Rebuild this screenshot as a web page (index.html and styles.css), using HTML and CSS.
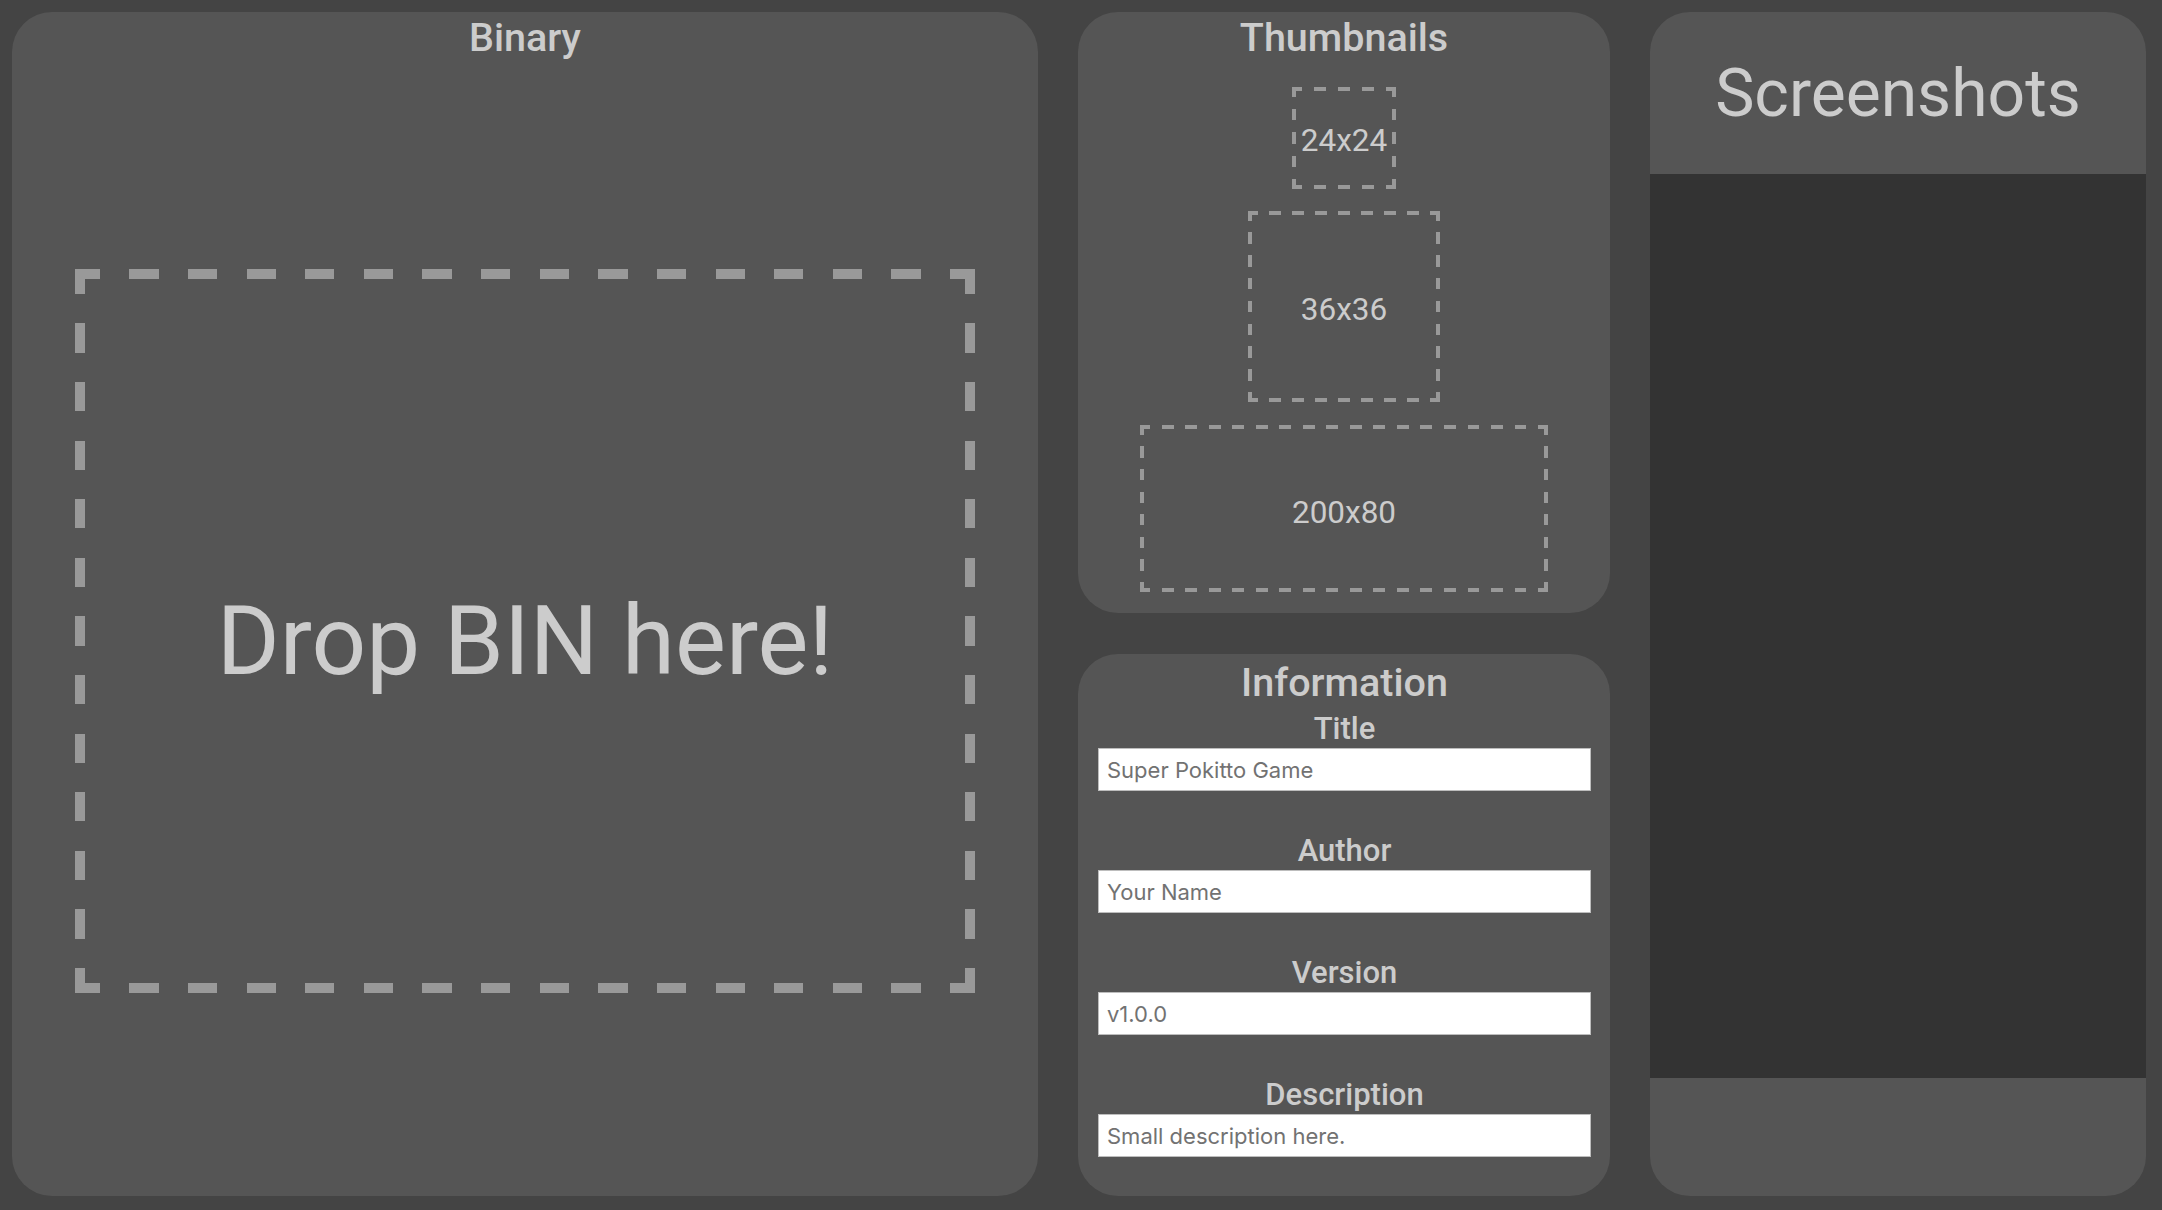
FILE: index.html
```html
<!DOCTYPE html>
<html lang="en">
<head>
<meta charset="utf-8">
<title>Pokitto Game Packager</title>
<link rel="stylesheet" href="styles.css">
</head>
<body>
<div class="app">
  <section class="panel binary">
    <h2 class="panel-title">Binary</h2>
    <div class="drop-area">
      <div class="dashed dropzone">Drop BIN here!</div>
    </div>
  </section>

  <div class="middle">
    <section class="panel thumbs">
      <h2 class="panel-title">Thumbnails</h2>
      <div class="dashed thumb thumb-24">24x24</div>
      <div class="dashed thumb thumb-36">36x36</div>
      <div class="dashed thumb thumb-200">200x80</div>
    </section>

    <section class="panel info">
      <h2 class="panel-title">Information</h2>
      <div class="field">
        <label for="f-title">Title</label>
        <input id="f-title" type="text" placeholder="Super Pokitto Game">
      </div>
      <div class="field">
        <label for="f-author">Author</label>
        <input id="f-author" type="text" placeholder="Your Name">
      </div>
      <div class="field">
        <label for="f-version">Version</label>
        <input id="f-version" type="text" placeholder="v1.0.0">
      </div>
      <div class="field">
        <label for="f-desc">Description</label>
        <input id="f-desc" type="text" placeholder="Small description here.">
      </div>
    </section>
  </div>

  <section class="panel shots">
    <header class="shots-head">Screenshots</header>
    <div class="shots-list"></div>
    <div class="shots-foot"></div>
  </section>
</div>
</body>
</html>
```

FILE: styles.css
```css
html, body {
  margin: 0;
  height: 100%;
}

body {
  background: #444444;
  color: #cccccc;
  font-family: Roboto, "Liberation Sans", sans-serif;
}

.app {
  box-sizing: border-box;
  height: 100vh;
  padding: 12px 16px 14px 12px;
  display: grid;
  grid-template-columns: 1026px 532px 1fr;
  column-gap: 40px;
}

.panel {
  background: #555555;
  border-radius: 40px;
}

.panel-title {
  margin: 0;
  padding-top: 4px;
  font-size: 39.5px;
  font-weight: 500;
  line-height: 44px;
  text-align: center;
}

/* Dashed frame: dashes of equal length to gaps, L-shaped corners */
.dashed {
  --dc: #999999;
  box-sizing: border-box;
  padding: var(--w);
  background:
    repeating-linear-gradient(90deg,
      var(--dc) calc(var(--c) - var(--gx)), var(--dc) var(--c),
      transparent var(--c), transparent calc(var(--c) + var(--gx)))
      left top / 100% var(--w) no-repeat,
    repeating-linear-gradient(90deg,
      var(--dc) calc(var(--c) - var(--gx)), var(--dc) var(--c),
      transparent var(--c), transparent calc(var(--c) + var(--gx)))
      left bottom / 100% var(--w) no-repeat,
    repeating-linear-gradient(180deg,
      var(--dc) calc(var(--c) - var(--gy)), var(--dc) var(--c),
      transparent var(--c), transparent calc(var(--c) + var(--gy)))
      left top / var(--w) 100% no-repeat,
    repeating-linear-gradient(180deg,
      var(--dc) calc(var(--c) - var(--gy)), var(--dc) var(--c),
      transparent var(--c), transparent calc(var(--c) + var(--gy)))
      right top / var(--w) 100% no-repeat;
}

/* Binary */
.binary {
  display: flex;
  flex-direction: column;
}

.drop-area {
  flex: 1;
  padding-top: 6px;
  display: flex;
  align-items: center;
  justify-content: center;
}

.dropzone {
  --w: 10px;
  --c: 25px;
  --gx: 29.31px;
  --gy: 29.304px;
  width: 900px;
  height: 724px;
  padding-top: 30px;
  display: flex;
  align-items: center;
  justify-content: center;
  font-size: 96px;
  font-weight: 400;
}

/* Middle column */
.middle {
  display: flex;
  flex-direction: column;
  gap: 41px;
  min-height: 0;
}

.thumbs {
  display: flex;
  flex-direction: column;
  align-items: center;
  padding-bottom: 21px;
}

.thumb {
  --w: 4px;
  --c: 10px;
  padding-top: 10px;
  display: flex;
  align-items: center;
  justify-content: center;
  font-size: 31.5px;
  margin-top: 22px;
}

.thumb-24 {
  --gx: 12px;
  --gy: 11.71px;
  width: 104px;
  height: 102px;
  padding-top: 8px;
  margin-top: 27px;
}

.thumb-36 {
  --gx: 11.47px;
  --gy: 11.4px;
  width: 192px;
  height: 191px;
}

.thumb-200 {
  --gx: 11.76px;
  --gy: 11.31px;
  width: 408px;
  height: 167px;
  padding-top: 12px;
  margin-top: 23px;
}

.info {
  flex: 1;
  padding: 0 19px 0 20px;
}

.info .panel-title {
  padding-top: 7px;
  margin-bottom: 6px;
}

.field + .field {
  margin-top: 42px;
}

.field label {
  display: block;
  text-align: center;
  font-size: 31px;
  font-weight: 500;
  line-height: 36px;
  margin-bottom: 1px;
}

.field input {
  display: block;
  box-sizing: border-box;
  width: 100%;
  height: 43px;
  margin: 0;
  padding: 0 8px;
  border: 1px solid #bdbdbd;
  border-radius: 0;
  background: #ffffff;
  color: #333333;
  font-family: Inter, "Noto Sans", sans-serif;
  font-size: 22px;
  outline: none;
}

.field input::placeholder {
  color: #727272;
}

/* Screenshots */
.shots {
  display: flex;
  flex-direction: column;
  overflow: hidden;
}

.shots-head {
  height: 162px;
  flex: none;
  display: flex;
  align-items: center;
  justify-content: center;
  font-size: 66px;
  font-weight: 400;
}

.shots-list {
  height: 904px;
  flex: none;
  background: #333333;
}

.shots-foot {
  flex: 1;
}
```
